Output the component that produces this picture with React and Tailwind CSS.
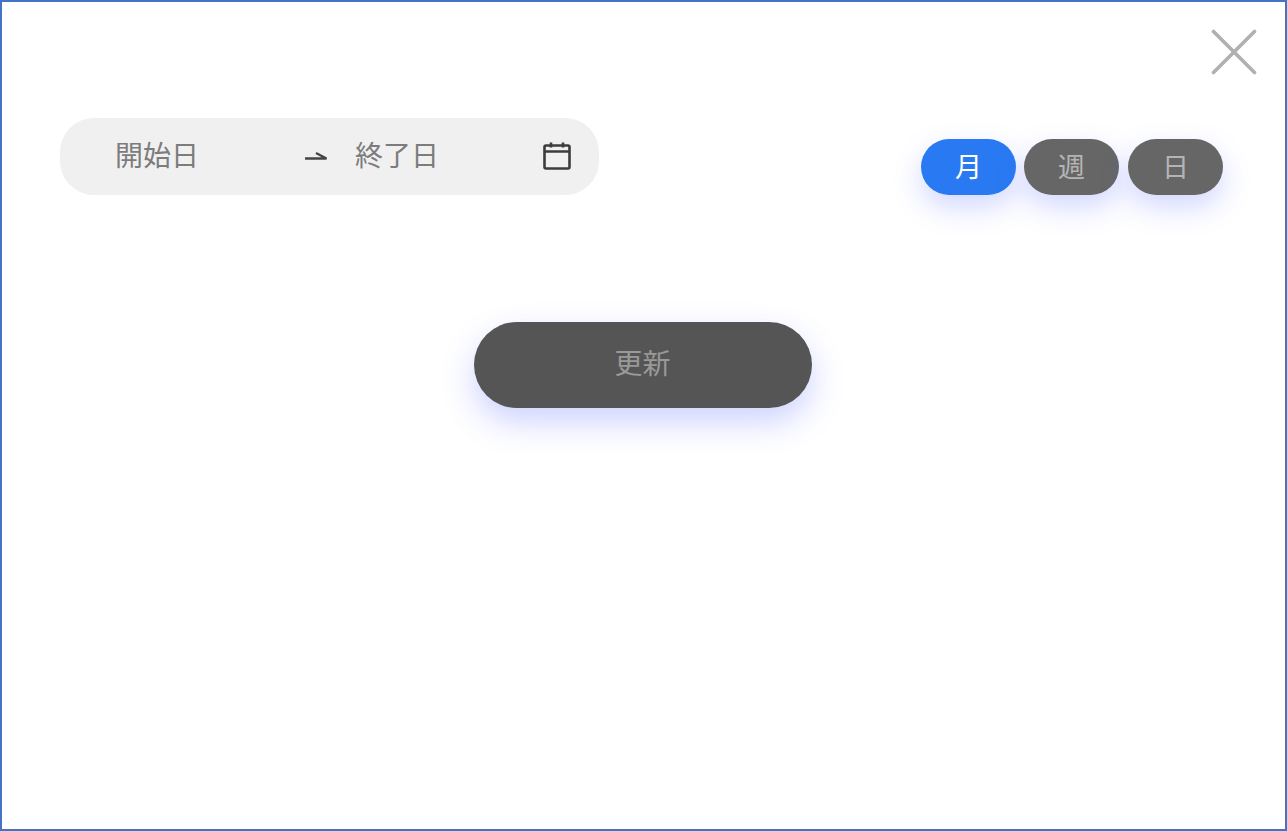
const FONT = 'font-["Noto_Sans_CJK_JP","Noto_Sans",sans-serif]'

function Toggle({ label, active }) {
  return (
    <button
      className={`w-[95px] h-[56px] rounded-full flex items-center justify-center pb-[4px] text-[27px] leading-none shadow-[0_12px_28px_rgba(90,110,255,0.27)] ${
        active ? 'bg-[#2979f2] text-white' : 'bg-[#666666] text-[#b4b4b4]'
      }`}
    >
      {label}
    </button>
  )
}

export default function App() {
  return (
    <div className={`relative w-[1287px] h-[831px] bg-white border-2 border-[#4472c4] overflow-hidden ${FONT}`}>
      {/* Close */}
      <button className="absolute top-[27px] right-[28px]">
        <svg width="46" height="46" viewBox="0 0 46 46" fill="none" className="block">
          <path d="M2.5 2.5l41 41M43.5 2.5l-41 41" stroke="#b0b0b0" strokeWidth="3.6" strokeLinecap="round" />
        </svg>
      </button>

      <div className="flex items-end justify-between pt-[116px] pl-[58px] pr-[62px]">
        {/* Date range */}
        <div className="w-[539px] h-[77px] rounded-[34px] bg-[#f0f0f0] flex items-center pl-[55px] pr-[28px] text-[28px] leading-none text-[#7c7c7c]">
          <span className="w-[190px] whitespace-nowrap pb-[5px]">開始日</span>
          <svg width="22" height="10" viewBox="0 0 22 10" fill="none" className="shrink-0 mb-[1px]">
            <path d="M0 7.5h21.5L11 2" stroke="#444444" strokeWidth="2.4" />
          </svg>
          <span className="ml-[28px] flex-1 whitespace-nowrap pb-[5px]">終了日</span>
          <svg width="28" height="28" viewBox="0 0 28 28" fill="none" className="shrink-0 mb-[2px] -ml-[1px]">
            <rect x="1.5" y="3.5" width="25" height="23" rx="1.5" stroke="#3c3c3c" strokeWidth="2.6" />
            <path d="M1.5 9.5h25M8 0.5v5M20 0.5v5" stroke="#3c3c3c" strokeWidth="2.6" />
          </svg>
        </div>

        {/* Period toggle */}
        <div className="flex gap-2">
          <Toggle label="月" active />
          <Toggle label="週" />
          <div className="ml-px">
            <Toggle label="日" />
          </div>
        </div>
      </div>

      <div className="flex justify-center mt-[127px] pr-[2px]">
        <button className="w-[338px] h-[86px] rounded-full bg-[#555555] text-[#999999] text-[28px] leading-none pb-[6px] shadow-[0_14px_32px_rgba(90,110,255,0.3)]">
          更新
        </button>
      </div>
    </div>
  )
}
